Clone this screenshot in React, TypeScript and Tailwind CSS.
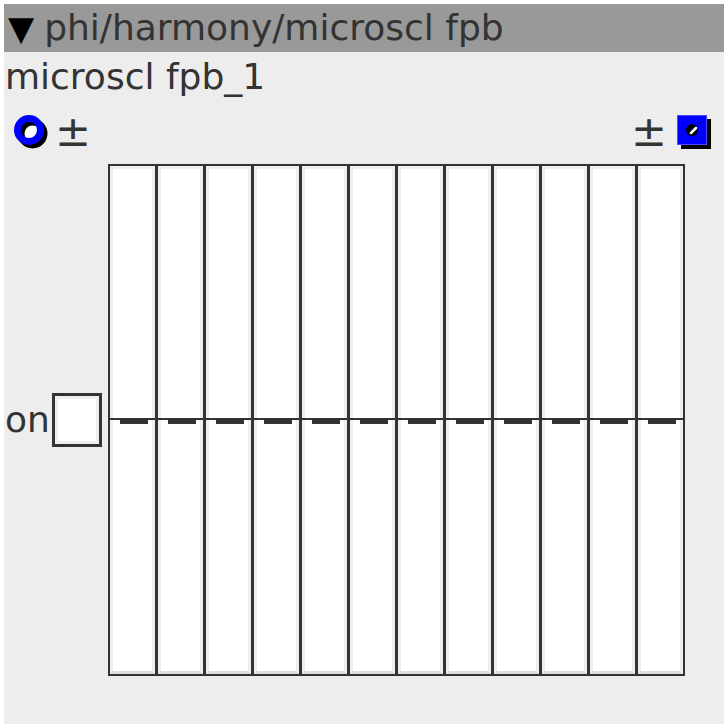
const font = { fontFamily: '"DejaVu Sans", "Liberation Sans", sans-serif' };

const RingToggle = () => (
  <svg width="36" height="38" viewBox="0 0 36 38">
    <circle cx="16" cy="16" r="8" fill="#ffffff" />
    <circle cx="19.5" cy="19.5" r="11.5" fill="none" stroke="#000000" strokeWidth="7" />
    <circle cx="16" cy="16" r="11.5" fill="none" stroke="#0000ff" strokeWidth="7" />
  </svg>
);

const SquareToggle = () => (
  <svg width="36" height="36" viewBox="0 0 36 36">
    <rect x="4" y="4" width="30" height="30" fill="#000000" />
    <rect x="0.5" y="0.5" width="29" height="29" fill="#0000ff" stroke="#4b4bff" />
    <circle cx="15" cy="15" r="6" fill="#000000" />
    <path d="M14 18 L19 13" stroke="#ffffff" strokeWidth="2.5" strokeLinecap="round" />
    <rect x="6" y="7" width="1" height="1" fill="#000" />
    <rect x="23" y="7" width="1" height="1" fill="#000" />
    <rect x="6" y="22" width="1" height="1" fill="#000" />
    <rect x="23" y="22" width="1" height="1" fill="#000" />
  </svg>
);

const sliders = Array.from({ length: 12 }, (_, i) => i);

export default function App() {
  return (
    <div className="w-[728px] h-[728px] bg-white p-1" style={font}>
      <div className="w-[720px] h-[720px] bg-[#ededed] flex flex-col text-[#333333]">
        <div className="h-[48px] bg-[#999999] flex items-center pl-[4px] text-[36px] leading-none">
          <span className="text-[#000000] text-[34px] mr-[10px]">▼</span>
          <span>phi/harmony/microscl fpb</span>
        </div>

        <div className="h-[50px] flex items-center pl-[1px] text-[36px] leading-none">
          microscl fpb_1
        </div>

        <div className="h-[62px] flex items-center justify-between pl-[9px] pr-[11px]">
          <div className="flex items-center gap-[6px]">
            <RingToggle />
            <span className="text-[43px] leading-none -mt-[4px]">±</span>
          </div>
          <div className="flex items-center gap-[10px]">
            <span className="text-[43px] leading-none -mt-[4px]">±</span>
            <SquareToggle />
          </div>
        </div>

        <div className="flex">
          <div className="w-[104px] flex items-center">
            <span className="text-[36px] leading-none pl-[1px] mr-[2px]">on</span>
            <div className="w-[50px] h-[54px] border-[3px] border-[#333333] bg-white">
              <div className="w-full h-full border-[3px] border-[#eeeeee]" />
            </div>
          </div>
          <div className="h-[512px] border-2 border-[#333333] bg-[#333333] flex gap-[3px]">
            {sliders.map((i) => (
              <div key={i} className="relative w-[45px] h-full bg-white border-[3px] border-[#eeeeee] border-b-[#dddddd]">
                <div className="absolute left-[-3px] right-[-3px] top-[249px] h-[2px] bg-[#333333]" />
                <div className="absolute left-[7px] w-[28px] top-[251px] h-[4px] bg-[#333333]" />
              </div>
            ))}
          </div>
        </div>
      </div>
    </div>
  );
}
